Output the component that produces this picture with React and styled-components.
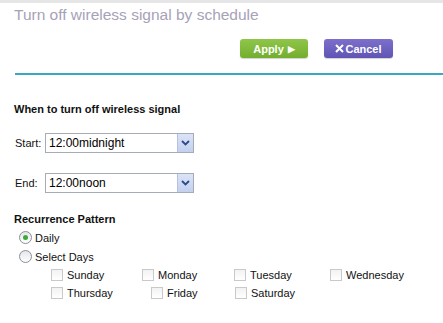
import * as React from "react"
import styled, { createGlobalStyle } from "styled-components"

const GlobalStyle = createGlobalStyle`
  body {
    margin: 0;
    background: #fff;
    font-family: "Liberation Sans", Arial, sans-serif;
  }
`

const Page = styled.div`
  width: 443px;
  height: 323px;
  overflow: hidden;
  background: #fff;
`

const TopBand = styled.div`
  height: 3px;
  background: #e6e6e6;
`

const Title = styled.h1`
  margin: 3px 0 0 14px;
  font-size: 15.5px;
  line-height: 18px;
  font-weight: normal;
  color: #a6a2b8;
`

const ButtonRow = styled.div`
  display: flex;
  gap: 16px;
  padding-left: 240px;
  margin-top: 15px;
`

const Button = styled.button`
  height: 19px;
  width: ${p => p.$w}px;
  border: none;
  border-radius: 3px;
  padding: 0;
  display: flex;
  align-items: center;
  justify-content: center;
  gap: ${p => p.$gap}px;
  color: #fff;
  font-family: "Liberation Sans", Arial, sans-serif;
  font-weight: bold;
  font-size: 11px;
  background: ${p => p.$tone === "green"
    ? "linear-gradient(#8fc64a, #74ae2e)"
    : "linear-gradient(#7d70cc, #5f54b4)"};
  box-shadow: 0 1px 1px rgba(0, 0, 0, 0.18);
`

const Divider = styled.div`
  margin: 15px 0 0 15px;
  height: 2px;
  background: #3aa8c1;
`

const Form = styled.div`
  padding-left: 14px;
`

const Heading = styled.div`
  font-size: 11px;
  line-height: 13px;
  font-weight: bold;
  color: #111;
  margin-top: ${p => p.$top}px;
`

const FieldRow = styled.div`
  display: flex;
  align-items: center;
  margin-top: ${p => p.$top}px;
  font-size: 11px;
  color: #111;
`

const FieldLabel = styled.span`
  width: 30px;
  padding-left: 1px;
`

const Select = styled.div`
  width: 149px;
  height: 20px;
  box-sizing: border-box;
  border: 1px solid #a5acb5;
  display: flex;
  align-items: stretch;
  background: #fff;
`

const SelectValue = styled.span`
  flex: 1;
  padding-left: 3px;
  font-size: 12px;
  line-height: 18px;
  color: #000;
`

const SelectArrow = styled.span`
  width: 15px;
  background: linear-gradient(#dbe3f7, #c3d0ef);
  border-left: 1px solid #b4c1e0;
  display: flex;
  align-items: center;
  justify-content: center;
`

const RadioGroup = styled.div`
  margin-top: 2px;
`

const RadioRow = styled.label`
  display: flex;
  align-items: center;
  gap: 3px;
  margin-left: 5px;
  height: 19px;
  font-size: 11px;
  color: #111;
`

const RadioCircle = styled.span`
  width: 11px;
  height: 11px;
  border-radius: 50%;
  border: 1px solid #8a8f96;
  background: linear-gradient(#e4e6ea, #fff);
  display: flex;
  align-items: center;
  justify-content: center;
  &::after {
    content: "";
    width: 5px;
    height: 5px;
    border-radius: 50%;
    background: ${p => (p.$on ? "#3ea83a" : "transparent")};
  }
`

const DayRow = styled.div`
  display: flex;
  padding-left: 37px;
  height: 18px;
  align-items: center;
`

const DayCell = styled.label`
  width: ${p => p.$w}px;
  display: flex;
  align-items: center;
  gap: 4px;
  font-size: 11px;
  color: #111;
`

const Box = styled.span`
  width: 10px;
  height: 10px;
  border: 1px solid #c9c9c9;
  background: linear-gradient(#f2f2f2, #fff);
`

const Chevron = () => (
  <svg width="9" height="6" viewBox="0 0 9 6">
    <path d="M1 1 L4.5 4.5 L8 1" fill="none" stroke="#2d4a8a" strokeWidth="1.8" />
  </svg>
)

const Field = ({ label, value, top }) => (
  <FieldRow $top={top}>
    <FieldLabel>{label}</FieldLabel>
    <Select>
      <SelectValue>{value}</SelectValue>
      <SelectArrow><Chevron /></SelectArrow>
    </Select>
  </FieldRow>
)

const Day = ({ name, w }) => (
  <DayCell $w={w}>
    <Box />
    {name}
  </DayCell>
)

export default function App() {
  return (
    <Page>
      <GlobalStyle />
      <TopBand />
      <Title>Turn off wireless signal by schedule</Title>
      <ButtonRow>
        <Button $tone="green" $w={68} $gap={4}>Apply <span style={{ fontSize: 9 }}>▶</span></Button>
        <Button $tone="purple" $w={69} $gap={1}>
          <svg width="9" height="9" viewBox="0 0 9 9">
            <path d="M1 1 L8 8 M8 1 L1 8" stroke="#fff" strokeWidth="2" />
          </svg>
          Cancel
        </Button>
      </ButtonRow>
      <Divider />
      <Form>
        <Heading $top={28}>When to turn off wireless signal</Heading>
        <Field label="Start:" value="12:00midnight" top={17} />
        <Field label="End:" value="12:00noon" top={20} />
        <Heading $top={20}>Recurrence Pattern</Heading>
        <RadioGroup>
          <RadioRow>
            <RadioCircle $on />
            Daily
          </RadioRow>
          <RadioRow>
            <RadioCircle />
            Select Days
          </RadioRow>
        </RadioGroup>
        <DayRow>
          <Day name="Sunday" w={91} />
          <Day name="Monday" w={92} />
          <Day name="Tuesday" w={96} />
          <Day name="Wednesday" w={90} />
        </DayRow>
        <DayRow>
          <Day name="Thursday" w={100} />
          <Day name="Friday" w={84} />
          <Day name="Saturday" w={90} />
        </DayRow>
      </Form>
    </Page>
  )
}
